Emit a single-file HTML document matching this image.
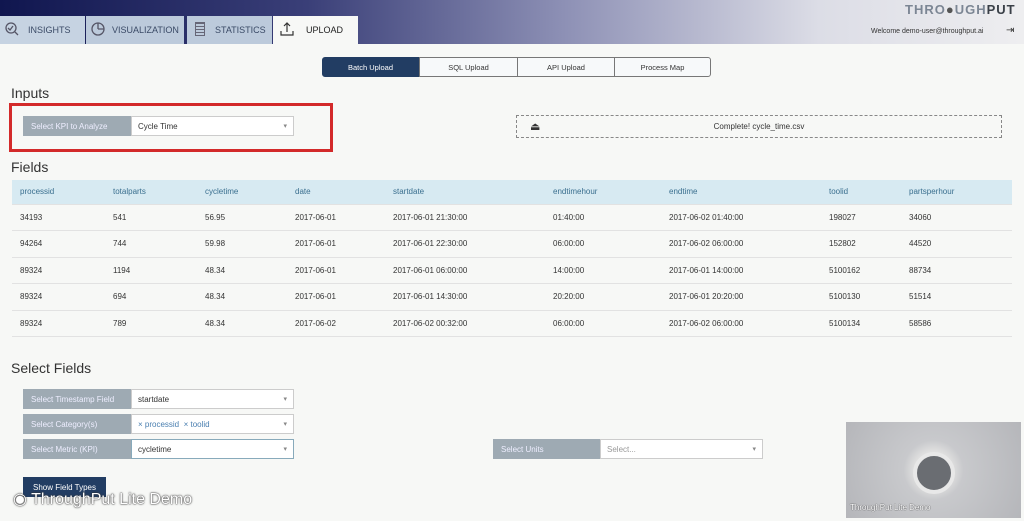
<!DOCTYPE html><html><head><style>
*{margin:0;padding:0;box-sizing:border-box}
html,body{width:1024px;height:521px;overflow:hidden}
body{background:#f7f8f6;font-family:"Liberation Sans",sans-serif;position:relative;color:#333}
.abs{position:absolute}
.hdr{left:0;top:0;width:1024px;height:44px;background:linear-gradient(90deg,#10164f 0%,#3a3f78 30%,#8d90b5 55%,#dcdde6 80%,#eeeef0 100%)}
.tab{top:16px;height:28px;font-size:9px;color:#3a4a66;display:flex;align-items:center;padding-left:30px;background:#c6d3e2}
.seg{top:57px;height:20px;font-size:7.5px;display:flex;align-items:center;justify-content:center;border:1px solid #777;background:#f7f9fa}
h2{position:absolute;font-weight:normal;font-size:14px;color:#333}
.lbl{background:#9eaab3;color:#eef;font-size:8px;display:flex;align-items:center;padding-left:8px;height:20px}
.inp{background:#fff;border:1px solid #ccc;font-size:8px;display:flex;align-items:center;padding-left:6px;height:20px}
.inp:after{content:"▾";position:absolute;right:6px;top:5px;font-size:7px;color:#888}
table{border-collapse:collapse;font-size:8px}
td,th{text-align:left;font-weight:normal;padding-left:8px;height:26.5px;border-bottom:1px solid #e2e2e2}
th{background:#d7eaf2;color:#3a6f8f;height:24px}
</style></head><body>
<div class="abs hdr"></div>
<div class="abs tab" style="left:0;width:85px;padding-left:28px">INSIGHTS</div>
<div class="abs tab" style="left:86px;width:98px;padding-left:26px;background:#bccadb">VISUALIZATION</div>
<div class="abs tab" style="left:187px;width:85px;padding-left:28px;background:#bccadb">STATISTICS</div>
<div class="abs tab" style="left:273px;width:85px;background:#f7f8f6;color:#222;padding-left:33px">UPLOAD</div>
<svg class="abs" style="left:5px;top:22px" width="14" height="14"><circle cx="6" cy="6" r="5" fill="none" stroke="#556" stroke-width="1.3"/><path d="M3 6l2 2 3-4M10 10l3 3" stroke="#556" stroke-width="1.3" fill="none"/></svg>
<svg class="abs" style="left:91px;top:22px" width="14" height="14"><circle cx="7" cy="7" r="6" fill="none" stroke="#556" stroke-width="1.3"/><path d="M7 7V1M7 7h6" stroke="#556" stroke-width="1.3"/></svg>
<div class="abs" style="left:195px;top:22px;width:10px;height:14px;border:1.3px solid #667;background:repeating-linear-gradient(#667 0 1px,transparent 1px 3px)"></div>
<svg class="abs" style="left:280px;top:22px" width="14" height="14"><path d="M7 10V1M4 4l3-3 3 3M1 9v4h12V9" stroke="#333" stroke-width="1.2" fill="none"/></svg>
<div class="abs" style="left:905px;top:2px;font-size:13px;font-weight:bold;letter-spacing:1px;color:#7c8694">THRO<span style="color:#555">●</span>UGH<span style="color:#3a4048">PUT</span></div>
<div class="abs" style="left:871px;top:28px;font-size:7px;color:#333">Welcome demo-user@throughput.ai</div>
<div class="abs" style="left:1006px;top:25px;font-size:10px;color:#333">⇥</div>
<div class="abs seg" style="left:322px;width:97px;background:#223d63;color:#fff;border-color:#223d63;border-radius:3px 0 0 3px">Batch Upload</div>
<div class="abs seg" style="left:419px;width:99px">SQL Upload</div>
<div class="abs seg" style="left:517px;width:98px">API Upload</div>
<div class="abs seg" style="left:614px;width:97px;border-radius:0 3px 3px 0">Process Map</div>
<h2 style="left:11px;top:85px">Inputs</h2>
<div class="abs" style="left:9px;top:103px;width:324px;height:49px;border:3px solid #d32a2a"></div>
<div class="abs lbl" style="left:23px;top:116px;width:109px">Select KPI to Analyze</div>
<div class="abs inp" style="left:131px;top:116px;width:163px">Cycle Time</div>
<div class="abs" style="left:516px;top:115px;width:486px;height:23px;border:1px dashed #888;font-size:8px;display:flex;align-items:center;justify-content:center">Complete! cycle_time.csv</div>
<div class="abs" style="left:530px;top:120px;font-size:11px">⏏</div>
<h2 style="left:11px;top:159px">Fields</h2>
<table class="abs" style="left:12px;top:180px;width:1000px">
<tr><th style="width:93px">processid</th><th style="width:92px">totalparts</th><th style="width:90px">cycletime</th><th style="width:98px">date</th><th style="width:160px">startdate</th><th style="width:116px">endtimehour</th><th style="width:160px">endtime</th><th style="width:80px">toolid</th><th>partsperhour</th></tr>
<tr><td>34193</td><td>541</td><td>56.95</td><td>2017-06-01</td><td>2017-06-01 21:30:00</td><td>01:40:00</td><td>2017-06-02 01:40:00</td><td>198027</td><td>34060</td></tr>
<tr><td>94264</td><td>744</td><td>59.98</td><td>2017-06-01</td><td>2017-06-01 22:30:00</td><td>06:00:00</td><td>2017-06-02 06:00:00</td><td>152802</td><td>44520</td></tr>
<tr><td>89324</td><td>1194</td><td>48.34</td><td>2017-06-01</td><td>2017-06-01 06:00:00</td><td>14:00:00</td><td>2017-06-01 14:00:00</td><td>5100162</td><td>88734</td></tr>
<tr><td>89324</td><td>694</td><td>48.34</td><td>2017-06-01</td><td>2017-06-01 14:30:00</td><td>20:20:00</td><td>2017-06-01 20:20:00</td><td>5100130</td><td>51514</td></tr>
<tr><td>89324</td><td>789</td><td>48.34</td><td>2017-06-02</td><td>2017-06-02 00:32:00</td><td>06:00:00</td><td>2017-06-02 06:00:00</td><td>5100134</td><td>58586</td></tr>
</table>
<h2 style="left:11px;top:360px">Select Fields</h2>
<div class="abs lbl" style="left:23px;top:389px;width:109px">Select Timestamp Field</div>
<div class="abs inp" style="left:131px;top:389px;width:163px">startdate</div>
<div class="abs lbl" style="left:23px;top:414px;width:109px">Select Category(s)</div>
<div class="abs inp" style="left:131px;top:414px;width:163px;color:#4a7fb0">× processid &nbsp;× toolid</div>
<div class="abs lbl" style="left:23px;top:439px;width:109px">Select Metric (KPI)</div>
<div class="abs inp" style="left:131px;top:439px;width:163px;border-color:#8ab">cycletime</div>
<div class="abs lbl" style="left:493px;top:439px;width:108px">Select Units</div>
<div class="abs inp" style="left:600px;top:439px;width:163px;color:#999">Select...</div>
<div class="abs" style="left:23px;top:477px;width:83px;height:20px;background:#223d63;color:#fff;font-size:8px;display:flex;align-items:center;justify-content:center">Show Field Types</div>
<div class="abs" style="left:13px;top:489px;font-size:16px;color:#fff;text-shadow:0 0 2px #444,0 0 1px #000">◉ ThroughPut Lite Demo</div>
<div class="abs" style="left:846px;top:422px;width:175px;height:96px;background:radial-gradient(circle at 50% 50%,#fff 0,#ddd 20%,#c8c9cc 30%,#b5b6ba 100%)"></div>
<div class="abs" style="left:913px;top:452px;width:42px;height:42px;border-radius:50%;background:#6a6d72;border:4px solid #e8e8e8"></div>
<div class="abs" style="left:850px;top:503px;font-size:8px;color:#fff;text-shadow:0 0 1px #000">ThroughPut Lite Demo</div>
</body></html>
